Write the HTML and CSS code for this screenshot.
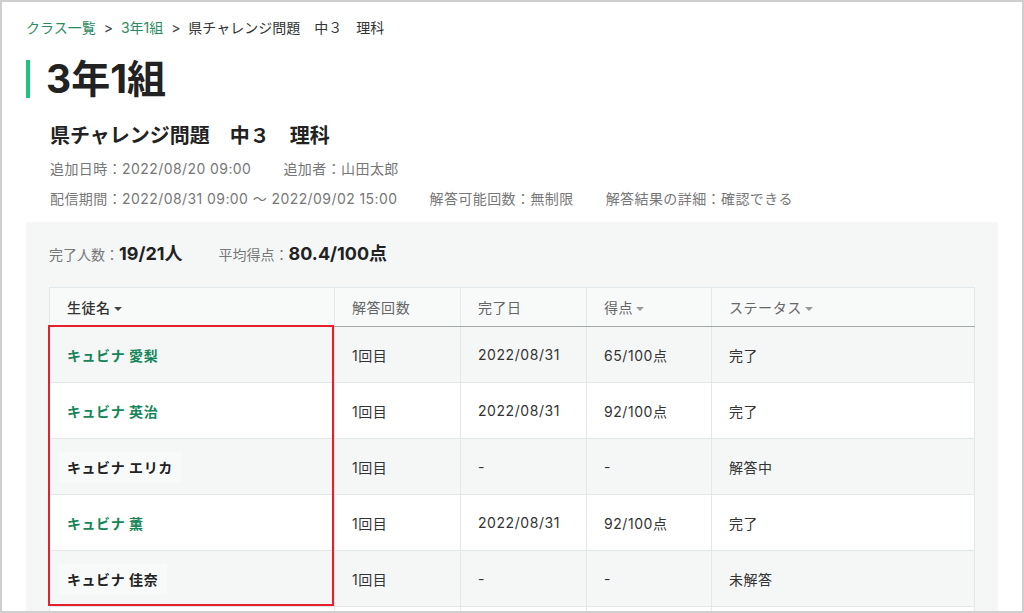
FILE: index.html
```html
<!DOCTYPE html>
<html lang="ja">
<head>
  <meta charset="UTF-8" />
  <meta name="viewport" content="width=device-width, initial-scale=1.0"/>
  <title>3年1組 - 県チャレンジ問題 中３ 理科</title>
  <link rel="stylesheet" href="styles.css">
</head>
<body>

  <div class="frame">
    <div class="page">
      <nav class="breadcrumb">
        <a href="#">クラス一覧</a>
        <span class="sep">&gt;</span>
        <a href="#">3年1組</a>
        <span class="sep">&gt;</span>
        <span class="current">県チャレンジ問題　中３　理科</span>
      </nav>

      <h1 class="page-title">3年1組</h1>

      <div class="info">
        <h2 class="info-title">県チャレンジ問題　中３　理科</h2>
        <div class="meta">
          <span>追加日時：2022/08/20 09:00</span>
          <span>追加者：山田太郎</span>
        </div>
        <div class="meta">
          <span>配信期間：2022/08/31 09:00 〜 2022/09/02 15:00</span>
          <span>解答可能回数：無制限</span>
          <span>解答結果の詳細：確認できる</span>
        </div>
      </div>

      <div class="panel">
        <div class="stats">
          <span class="stat"><span class="label">完了人数：</span><span class="value">19/21人</span></span>
          <span class="stat"><span class="label">平均得点：</span><span class="value">80.4/100点</span></span>
        </div>

        <div class="table-wrap">
          <table class="results">
            <colgroup>
              <col style="width: 285px">
              <col style="width: 126px">
              <col style="width: 126px">
              <col style="width: 125px">
              <col>
            </colgroup>
            <thead>
              <tr>
                <th class="main sortable">生徒名</th>
                <th>解答回数</th>
                <th>完了日</th>
                <th class="sortable">得点</th>
                <th class="sortable">ステータス</th>
              </tr>
            </thead>
            <tbody>
              <tr>
                <td><a class="name" href="#">キュビナ 愛梨</a></td>
                <td>1回目</td>
                <td>2022/08/31</td>
                <td>65/100点</td>
                <td>完了</td>
              </tr>
              <tr>
                <td><a class="name" href="#">キュビナ 英治</a></td>
                <td>1回目</td>
                <td>2022/08/31</td>
                <td>92/100点</td>
                <td>完了</td>
              </tr>
              <tr>
                <td><span class="name plain">キュビナ エリカ</span></td>
                <td>1回目</td>
                <td>-</td>
                <td>-</td>
                <td>解答中</td>
              </tr>
              <tr>
                <td><a class="name" href="#">キュビナ 薫</a></td>
                <td>1回目</td>
                <td>2022/08/31</td>
                <td>92/100点</td>
                <td>完了</td>
              </tr>
              <tr>
                <td><span class="name plain">キュビナ 佳奈</span></td>
                <td>1回目</td>
                <td>-</td>
                <td>-</td>
                <td>未解答</td>
              </tr>
              <!-- next page of rows starts below the fold -->
              <tr class="more">
                <td></td>
                <td></td>
                <td></td>
                <td></td>
                <td></td>
              </tr>
            </tbody>
          </table>
          <div class="highlight"></div>
        </div>
      </div>
    </div>
  </div>

</body>
</html>
```

FILE: styles.css
```css
* {
  box-sizing: border-box;
}
body {
  margin: 0;
  font-family: Inter, "Noto Sans CJK JP", sans-serif;
  color: #333;
  background: #fff;
}
.frame {
  width: 1024px;
  height: 613px;
  border: 2px solid #cfcfcf;
  overflow: hidden;
}
.page {
  padding: 16px 24px 0;
}
a {
  text-decoration: none;
}

/* breadcrumb */
.breadcrumb {
  font-size: 14px;
  line-height: 20px;
  color: #333;
}
.breadcrumb a {
  color: #2a8a60;
}
.breadcrumb .sep {
  margin: 0 4px;
  color: #444;
}

/* heading */
.page-title {
  margin: 22px 0 0;
  padding-left: 16px;
  border-left: 4px solid #1fc47c;
  font-size: 39px;
  line-height: 38px;
  font-weight: 700;
  color: #222;
}

.info {
  padding-left: 24px;
  margin-top: 24px;
}
.info-title {
  margin: 0;
  font-size: 20px;
  line-height: 28px;
  font-weight: 700;
  color: #222;
}
.meta {
  display: flex;
  gap: 32px;
  font-size: 14px;
  line-height: 20px;
  letter-spacing: 0.03em;
  color: #777;
  margin-top: 10px;
}
.info-title + .meta {
  margin-top: 9px;
}

/* results panel */
.panel {
  margin-top: 13px;
  background: #f5f7f7;
  padding: 20px 23px 40px;
}
.stats {
  display: flex;
  gap: 36px;
  height: 24px;
  line-height: 24px;
  align-items: baseline;
}
.stat .label {
  font-size: 14px;
  color: #777;
}
.stat .value {
  font-size: 18px;
  font-weight: 700;
  color: #222;
}

.table-wrap {
  position: relative;
  margin-top: 21px;
}
.results {
  width: 100%;
  border-collapse: collapse;
  table-layout: fixed;
  font-size: 14px;
  letter-spacing: 0.04em;
  border: 1px solid #e2e8ea;
}
.results th {
  height: 39px;
  padding: 0 17px;
  text-align: left;
  font-weight: 400;
  color: #666;
  background: #f8fafa;
  border-left: 1px solid #e2e8ea;
  border-bottom: 1px solid #a3a8aa;
}
.results th.main {
  color: #333;
  font-weight: 500;
}
.results th.sortable::after {
  content: "";
  display: inline-block;
  margin-left: 3px;
  vertical-align: middle;
  border-left: 4px solid transparent;
  border-right: 4px solid transparent;
  border-top: 4px solid #999;
}
.results th.main::after {
  border-top-color: #444;
}
.results td {
  height: 56px;
  padding: 0 17px;
  color: #333;
  border-left: 1px solid #e2e8ea;
  border-bottom: 1px solid #e2e8ea;
}
.results tbody tr:nth-child(odd) td {
  background: #f5f7f7;
}
.results tbody tr:nth-child(even) td {
  background: #fff;
}
.name {
  font-weight: 700;
  color: #16855a;
}
.name.plain {
  color: #222;
  display: inline-block;
  padding: 5px 9px;
  margin-left: -9px;
  background: #f8fafa;
}

/* annotation box */
.highlight {
  position: absolute;
  left: -1px;
  top: 38px;
  width: 286px;
  height: 281px;
  border: 2px solid #e5202a;
  pointer-events: none;
}
```
